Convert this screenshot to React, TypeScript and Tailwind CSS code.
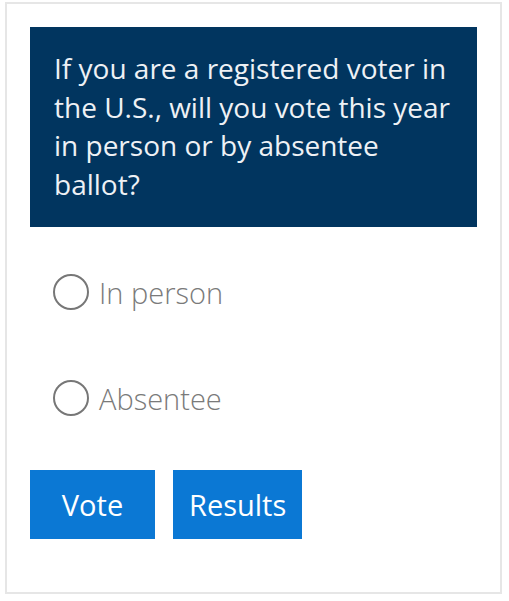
export default function App() {
  const options = ["In person", "Absentee"];

  return (
    <div className="min-h-screen bg-white pt-[2px] pl-[5px]" style={{ fontFamily: '"Open Sans", "Liberation Sans", sans-serif' }}>
      <div className="w-[497px] border-2 border-[#e6e6e6] px-[23px] pt-[23px] pb-[53px]">
        {/* Question */}
        <div className="h-[200px] bg-[#01355f] px-6 pt-[22px]">
          <p className="text-[28px] leading-[38.5px] text-[#eef1f5]">
            If you are a registered voter in the U.S., will you vote this year in person or by absentee ballot?
          </p>
        </div>

        {/* Options */}
        <div className="mt-[47px] flex flex-col gap-[70px] pl-[23px]">
          {options.map((opt) => (
            <label key={opt} className="flex h-9 items-center gap-[10px] cursor-pointer">
              <span className="h-9 w-9 shrink-0 rounded-full border-2 border-[#777777]" />
              <span className="text-[29px] font-light leading-none text-[#7a7a7a]">{opt}</span>
            </label>
          ))}
        </div>

        {/* Actions */}
        <div className="mt-[54px] flex gap-[18px]">
          <button className="h-[69px] min-w-[125px] bg-[#0b78d4] px-4 text-[29px] text-white">Vote</button>
          <button className="h-[69px] min-w-[125px] bg-[#0b78d4] px-4 text-[29px] text-white">Results</button>
        </div>
      </div>
    </div>
  );
}
